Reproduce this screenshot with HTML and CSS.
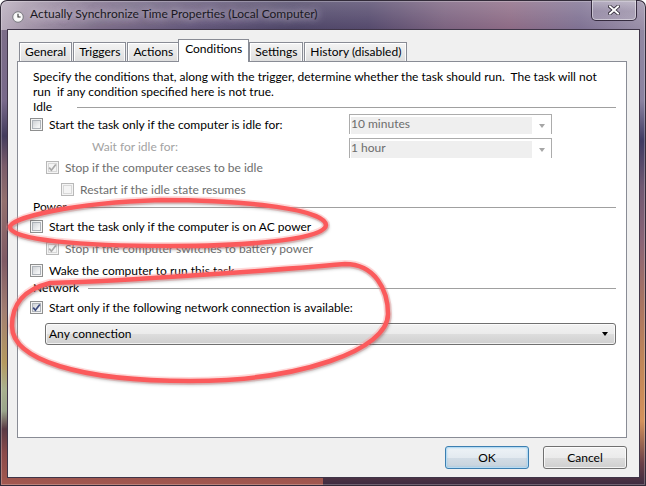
FILE: index.html
```html
<!DOCTYPE html>
<html>
<head>
<meta charset="utf-8">
<title>Actually Synchronize Time Properties</title>
<link rel="stylesheet" href="styles.css">
</head>
<body>
<div class="window">
  <div class="titlebar">
    <svg class="app-icon" width="12" height="12" viewBox="0 0 12 12">
      <circle cx="6" cy="6" r="5.3" fill="#eeeeee" stroke="#7a7a80" stroke-width="1"/>
      <circle cx="6" cy="6" r="3.8" fill="#fbfbfb"/>
      <path d="M6 2.8 V6 H8.6" fill="none" stroke="#333" stroke-width="1.1"/>
    </svg>
    <span class="title">Actually Synchronize Time Properties (Local Computer)</span>
    <div class="close">
      <svg width="12" height="10" viewBox="0 0 12 10">
        <path d="M2 1.5 L10 8.5 M10 1.5 L2 8.5" stroke="#2a2430" stroke-width="3.6" stroke-linecap="square"/>
        <path d="M2 1.5 L10 8.5 M10 1.5 L2 8.5" stroke="#ffffff" stroke-width="2" stroke-linecap="square"/>
      </svg>
    </div>
  </div>

  <div class="client">
    <div class="tabs">
      <div class="tab">General</div>
      <div class="tab">Triggers</div>
      <div class="tab">Actions</div>
      <div class="tab active">Conditions</div>
      <div class="tab">Settings</div>
      <div class="tab">History (disabled)</div>
    </div>

    <div class="panel">
      <p class="intro">Specify the conditions that, along with the trigger, determine whether the task should run.&nbsp; The task will not<br>run&nbsp; if any condition specified here is not true.</p>

      <div class="group"><span class="group-label">Idle</span><span class="group-line"></span></div>

      <div class="row tall">
        <label class="check"><span class="cb"><span class="cb-inner"></span></span>Start the task only if the computer is idle for:</label>
        <div class="combo-off"><span class="combo-field">10 minutes</span><span class="combo-arrow"></span></div>
      </div>
      <div class="row tall gap-sm">
        <span class="wait">Wait for idle for:</span>
        <div class="combo-off"><span class="combo-field">1 hour</span><span class="combo-arrow"></span></div>
      </div>
      <div class="row first indent1">
        <label class="check dim"><span class="cb off"><span class="cb-inner"></span><svg class="tick" viewBox="0 0 13 13"><path d="M3.2 6.6 L5.4 9.2 L9.8 3.4"/></svg></span>Stop if the computer ceases to be idle</label>
      </div>
      <div class="row indent2">
        <label class="check dim"><span class="cb off"><span class="cb-inner"></span></span>Restart if the idle state resumes</label>
      </div>

      <div class="group"><span class="group-label">Power</span><span class="group-line"></span></div>
      <div class="row">
        <label class="check"><span class="cb"><span class="cb-inner"></span></span>Start the task only if the computer is on AC power</label>
      </div>
      <div class="row indent1">
        <label class="check dim"><span class="cb off"><span class="cb-inner"></span><svg class="tick" viewBox="0 0 13 13"><path d="M3.2 6.6 L5.4 9.2 L9.8 3.4"/></svg></span>Stop if the computer switches to battery power</label>
      </div>
      <div class="row">
        <label class="check"><span class="cb"><span class="cb-inner"></span></span>Wake the computer to run this task</label>
      </div>

      <div class="group"><span class="group-label">Network</span><span class="group-line"></span></div>
      <div class="row">
        <label class="check"><span class="cb on"><span class="cb-inner"></span><svg class="tick" viewBox="0 0 13 13"><path d="M3.2 6.6 L5.4 9.2 L9.8 3.4"/></svg></span>Start only if the following network connection is available:</label>
      </div>
      <div class="combo-on"><span>Any connection</span><span class="combo-arrow dark"></span></div>
    </div>

    <div class="buttons">
      <div class="btn default">OK</div>
      <div class="btn">Cancel</div>
    </div>
  </div>
</div>

<svg class="annot" width="646" height="486" viewBox="0 0 646 486">
  <g class="glow">
    <path d="M 10 227 C 10 218, 70 203, 160 200 C 250 200, 326 210, 326 225 C 326 238, 260 246, 170 246 C 80 246, 10 240, 10 227 Z"/>
    <path d="M 12 326 C 12 305, 22 290, 50 283 C 130 281, 300 268, 345 264 C 375 264, 388 290, 388 314 C 388 350, 300 381, 190 381 C 80 381, 12 360, 12 326 Z"/>
  </g>
  <g class="ring">
    <path d="M 10 227 C 10 218, 70 203, 160 200 C 250 200, 326 210, 326 225 C 326 238, 260 246, 170 246 C 80 246, 10 240, 10 227 Z"/>
    <path d="M 12 326 C 12 305, 22 290, 50 283 C 130 281, 300 268, 345 264 C 375 264, 388 290, 388 314 C 388 350, 300 381, 190 381 C 80 381, 12 360, 12 326 Z"/>
  </g>
</svg>
</body>
</html>
```

FILE: styles.css
```css
* { box-sizing: border-box; }

html, body {
  margin: 0;
  padding: 0;
}

body {
  position: relative;
  width: 646px;
  height: 486px;
  overflow: hidden;
  background: #ffffff;
  font-family: Lato, "Liberation Sans", sans-serif;
  font-size: 12px;
  color: #000;
}

/* ---------- window frame ---------- */
.window {
  width: 646px;
  height: 486px;
  display: flex;
  flex-direction: column;
  padding: 0 5px 7px 6px;
  border: 1px solid rgba(28, 20, 36, 0.9);
  border-radius: 7px 7px 0 0;
  box-shadow: inset 0 0 0 1px rgba(255, 255, 255, 0.25);
  background:
    linear-gradient(rgba(255, 255, 255, 0.18), rgba(255, 255, 255, 0) 28px) top / 100% 29px no-repeat,
    linear-gradient(90deg, #b9adbd 0, #a597aa 4%, #7d6e8a 15%, #625679 30%, #4e4668 45%, #554a6d 57%, #7c6380 69%, #8d6b85 79%, #7f7293 90%, #9a8fa8 100%) top / 100% 29px no-repeat,
    linear-gradient(#7e7088 0, #78698a 100px, #433c5c 135px, #7a5c6a 165px, #93706e 200px, #7f5a64 260px, #a27e72 310px, #b59a60 362px, #a9b08e 388px, #9aa48a 410px, #5a3a44 428px, #8a4a4a 452px, #a55a50 486px) left / 50% 100% no-repeat,
    linear-gradient(#948aa2 0, #8a82a0 100px, #3e3a62 140px, #6f5872 185px, #8a6476 240px, #a87462 300px, #c08658 360px, #d4925c 420px, #6a4048 462px, #3a2a40 486px) right / 50% 100% no-repeat;
}

.titlebar {
  height: 28px;
  display: flex;
  align-items: flex-start;
  margin: 0 -5px 0 -6px;
  padding-left: 11px;
}

.app-icon {
  margin-top: 10px;
  flex: none;
}

.title {
  margin: 5px 0 0 6px;
  line-height: 15px;
  color: #1a1822;
  white-space: nowrap;
  text-shadow: 0 0 7px rgba(225, 215, 230, 0.95), 0 0 12px rgba(225, 215, 230, 0.7);
}

.close {
  margin: -1px 8px 0 auto;
  width: 46px;
  height: 21px;
  display: flex;
  align-items: center;
  justify-content: center;
  border: 1px solid rgba(40, 30, 50, 0.9);
  border-top: none;
  border-radius: 0 0 5px 5px;
  background: linear-gradient(rgba(255, 255, 255, 0.28), rgba(255, 255, 255, 0.08) 55%, rgba(255, 255, 255, 0.16));
  box-shadow: inset 0 0 0 1px rgba(255, 255, 255, 0.45);
}

/* ---------- client ---------- */
.client {
  flex: 1;
  display: flex;
  flex-direction: column;
  padding: 9px 12px 0 9px;
  border: 1px solid #3f3548;
  background: #f0f0f0;
}

.tabs {
  position: relative;
  z-index: 1;
  display: flex;
  align-items: flex-end;
  height: 23px;
  margin-bottom: -1px;
  padding-left: 2px;
}

.tab {
  height: 19px;
  margin: 0 1px 1px 0;
  padding: 0 5px;
  border: 1px solid #898c95;
  border-bottom: none;
  line-height: 17px;
  white-space: nowrap;
  background: linear-gradient(#f4f4f4, #e9e9e9 50%, #dedede);
  box-shadow: inset 1px 1px 0 #ffffff, inset -1px 0 0 #fbfbfb;
}

.tab.active {
  height: 23px;
  margin: 0 0 0 -2px;
  padding: 0 6px;
  background: #ffffff;
  box-shadow: none;
}

.panel {
  height: 377px;
  padding: 7px 10px 0 12px;
  border: 1px solid #898c95;
  background: #ffffff;
}

.intro {
  margin: 0;
  padding-left: 3px;
  line-height: 15px;
  white-space: nowrap;
}

.group {
  display: flex;
  align-items: center;
  height: 15px;
  line-height: 15px;
  margin-top: 2px;
  padding-left: 3px;
}

.intro + .group { margin-top: 0; }

.group-label {
  min-width: 35px;
  margin-right: 9px;
}

.group-line {
  flex: 1;
  height: 1px;
  margin-top: 2px;
  background: #a0a0a0;
}

.row {
  display: flex;
  align-items: center;
  height: 15px;
  line-height: 15px;
  margin-top: 7px;
  white-space: nowrap;
}

.group + .row { margin-top: 5px; }
.row.tall { height: 20px; margin-top: 0; }
.row.gap-sm { margin-top: 4px; }
.row.first { margin-top: 2px; }
.indent1 { padding-left: 16px; }
.indent2 { padding-left: 31px; }

.check {
  display: flex;
  align-items: center;
  gap: 6px;
}

.check.dim { color: #6d6d6d; }

.wait {
  margin: -3px 0 0 62px;
  color: #a3a3a3;
}

/* checkbox */
.cb {
  display: grid;
  width: 13px;
  height: 13px;
  flex: none;
  border: 1px solid #8e8f8f;
  padding: 1px;
  background: #f4f4f4;
}

.cb > * { grid-area: 1 / 1; }

.cb-inner {
  border: 1px solid #aeb3b9;
  background: linear-gradient(135deg, #cfd2d6, #f3f4f5 80%);
}

.cb.off { border-color: #b8b8b8; }
.cb.off .cb-inner { border-color: #d8d8d8; background: #f4f4f4; }

.tick {
  width: 13px;
  height: 13px;
  margin: -2px;
  fill: none;
  stroke: #3d4b7f;
  stroke-width: 1.7;
}

.cb.off .tick { stroke: #a8a8a8; }

/* disabled combos */
.combo-off {
  display: flex;
  margin: 0 64px 0 auto;
  width: 203px;
  height: 20px;
  padding: 2px 0 0 1px;
  border: 1px solid #acacac;
  border-bottom: none;
  background: #ffffff;
}

.combo-field {
  width: 181px;
  height: 17px;
  line-height: 14px;
  color: #6d6d6d;
  background: #efefef;
}

.combo-arrow {
  flex: 1;
  display: flex;
  align-items: center;
  justify-content: center;
}

.combo-arrow::after {
  content: "";
  border-left: 3.5px solid transparent;
  border-right: 3.5px solid transparent;
  border-top: 4px solid #a6a6a6;
}

.combo-arrow.dark::after { border-top-color: #000; }

.combo-on {
  display: flex;
  align-items: center;
  height: 22px;
  margin: 8px 0 0 15px;
  padding-left: 3px;
  line-height: 20px;
  border: 1px solid #707070;
  border-radius: 3px;
  background: linear-gradient(#f2f2f2, #ebebeb 50%, #dddddd 50%, #cfcfcf);
  box-shadow: inset 0 0 0 1px rgba(255, 255, 255, 0.7);
}

.combo-on span:first-child { flex: 1; }
.combo-on .combo-arrow { flex: none; width: 20px; }

/* buttons */
.buttons {
  display: flex;
  justify-content: flex-end;
  gap: 14px;
  margin-top: 8px;
}

.btn {
  width: 84px;
  height: 23px;
  line-height: 21px;
  text-align: center;
  border: 1px solid #707070;
  border-radius: 3px;
  background: linear-gradient(#f2f2f2, #ebebeb 50%, #dddddd 50%, #cfcfcf);
  box-shadow: inset 0 0 0 1px rgba(255, 255, 255, 0.75);
}

.btn.default {
  border-color: #3c7fb1;
  background: linear-gradient(#eef3f7, #e3eaf0 50%, #d3dde6 50%, #c6d2dc);
  box-shadow: inset 0 0 0 1px #b5dbf3, inset 0 0 2px 1px rgba(60, 170, 230, 0.35);
}

/* annotations */
.annot {
  position: absolute;
  left: 0;
  top: 0;
  pointer-events: none;
}

.annot .glow {
  fill: none;
  stroke: rgba(255, 150, 150, 0.35);
  stroke-width: 8;
}

.annot .ring {
  fill: none;
  stroke: #fb5a5c;
  stroke-width: 4.5;
  filter: drop-shadow(1px 2px 1.5px rgba(0, 0, 0, 0.22));
}
```
